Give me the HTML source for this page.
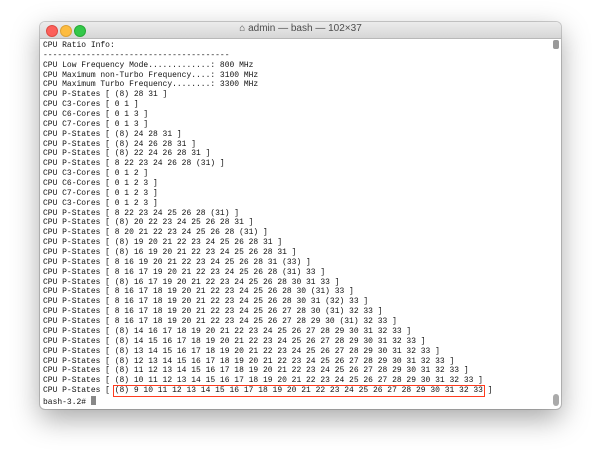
<!DOCTYPE html>
<html><head><style>
html,body{margin:0;padding:0;background:#fff;width:600px;height:466px;overflow:hidden}
.win{position:absolute;left:40px;top:22px;width:521px;height:387px;background:#fff;border-radius:5px;box-shadow:0 10px 28px rgba(0,0,0,0.35),0 0 0 1px rgba(0,0,0,0.18);overflow:hidden}
.tb{height:16px;background:linear-gradient(#ececec,#d6d6d6);border-bottom:1px solid #b8b8b8;position:relative}
.dot{position:absolute;top:3px;width:10px;height:10px;border-radius:50%}
.t{position:absolute;left:0;right:0;top:1px;text-align:center;font:10px "Liberation Sans",sans-serif;color:#4d4d4d}
pre{position:absolute;left:3px;top:19px;margin:0;font:7.98px/9.86px "Liberation Mono",monospace;color:#111}
.sb{position:absolute;right:2px;top:18px;width:6px;height:9px;background:#999;border-radius:2px}
.sb2{position:absolute;right:2px;top:372px;width:6px;height:12px;background:#aaa;border-radius:3px}
.box{position:absolute;left:113px;top:385px;width:370px;height:10px;border:1.5px solid #ff3b1f;box-sizing:content-box}
.cur{display:inline-block;width:5px;height:9px;background:#888;vertical-align:-1px}
</style></head><body>
<div class="win">
<div class="tb">
<div class="dot" style="left:6px;background:#fc605b;border:0.5px solid #de4a42"></div>
<div class="dot" style="left:20px;background:#fdbc40;border:0.5px solid #dea236"></div>
<div class="dot" style="left:34px;background:#34c84a;border:0.5px solid #27aa35"></div>
<div class="t">⌂ admin — bash — 102×37</div>
</div>
<div class="sb"></div><div class="sb2"></div>
<pre>CPU Ratio Info:
---------------------------------------
CPU Low Frequency Mode.............: 800 MHz
CPU Maximum non-Turbo Frequency....: 3100 MHz
CPU Maximum Turbo Frequency........: 3300 MHz
CPU P-States [ (8) 28 31 ]
CPU C3-Cores [ 0 1 ]
CPU C6-Cores [ 0 1 3 ]
CPU C7-Cores [ 0 1 3 ]
CPU P-States [ (8) 24 28 31 ]
CPU P-States [ (8) 24 26 28 31 ]
CPU P-States [ (8) 22 24 26 28 31 ]
CPU P-States [ 8 22 23 24 26 28 (31) ]
CPU C3-Cores [ 0 1 2 ]
CPU C6-Cores [ 0 1 2 3 ]
CPU C7-Cores [ 0 1 2 3 ]
CPU C3-Cores [ 0 1 2 3 ]
CPU P-States [ 8 22 23 24 25 26 28 (31) ]
CPU P-States [ (8) 20 22 23 24 25 26 28 31 ]
CPU P-States [ 8 20 21 22 23 24 25 26 28 (31) ]
CPU P-States [ (8) 19 20 21 22 23 24 25 26 28 31 ]
CPU P-States [ (8) 16 19 20 21 22 23 24 25 26 28 31 ]
CPU P-States [ 8 16 19 20 21 22 23 24 25 26 28 31 (33) ]
CPU P-States [ 8 16 17 19 20 21 22 23 24 25 26 28 (31) 33 ]
CPU P-States [ (8) 16 17 19 20 21 22 23 24 25 26 28 30 31 33 ]
CPU P-States [ 8 16 17 18 19 20 21 22 23 24 25 26 28 30 (31) 33 ]
CPU P-States [ 8 16 17 18 19 20 21 22 23 24 25 26 28 30 31 (32) 33 ]
CPU P-States [ 8 16 17 18 19 20 21 22 23 24 25 26 27 28 30 (31) 32 33 ]
CPU P-States [ 8 16 17 18 19 20 21 22 23 24 25 26 27 28 29 30 (31) 32 33 ]
CPU P-States [ (8) 14 16 17 18 19 20 21 22 23 24 25 26 27 28 29 30 31 32 33 ]
CPU P-States [ (8) 14 15 16 17 18 19 20 21 22 23 24 25 26 27 28 29 30 31 32 33 ]
CPU P-States [ (8) 13 14 15 16 17 18 19 20 21 22 23 24 25 26 27 28 29 30 31 32 33 ]
CPU P-States [ (8) 12 13 14 15 16 17 18 19 20 21 22 23 24 25 26 27 28 29 30 31 32 33 ]
CPU P-States [ (8) 11 12 13 14 15 16 17 18 19 20 21 22 23 24 25 26 27 28 29 30 31 32 33 ]
CPU P-States [ (8) 10 11 12 13 14 15 16 17 18 19 20 21 22 23 24 25 26 27 28 29 30 31 32 33 ]
CPU P-States [ (8) 9 10 11 12 13 14 15 16 17 18 19 20 21 22 23 24 25 26 27 28 29 30 31 32 33 ]
bash-3.2# <span class="cur"></span></pre>
</div>
<div class="box"></div>
</body></html>
